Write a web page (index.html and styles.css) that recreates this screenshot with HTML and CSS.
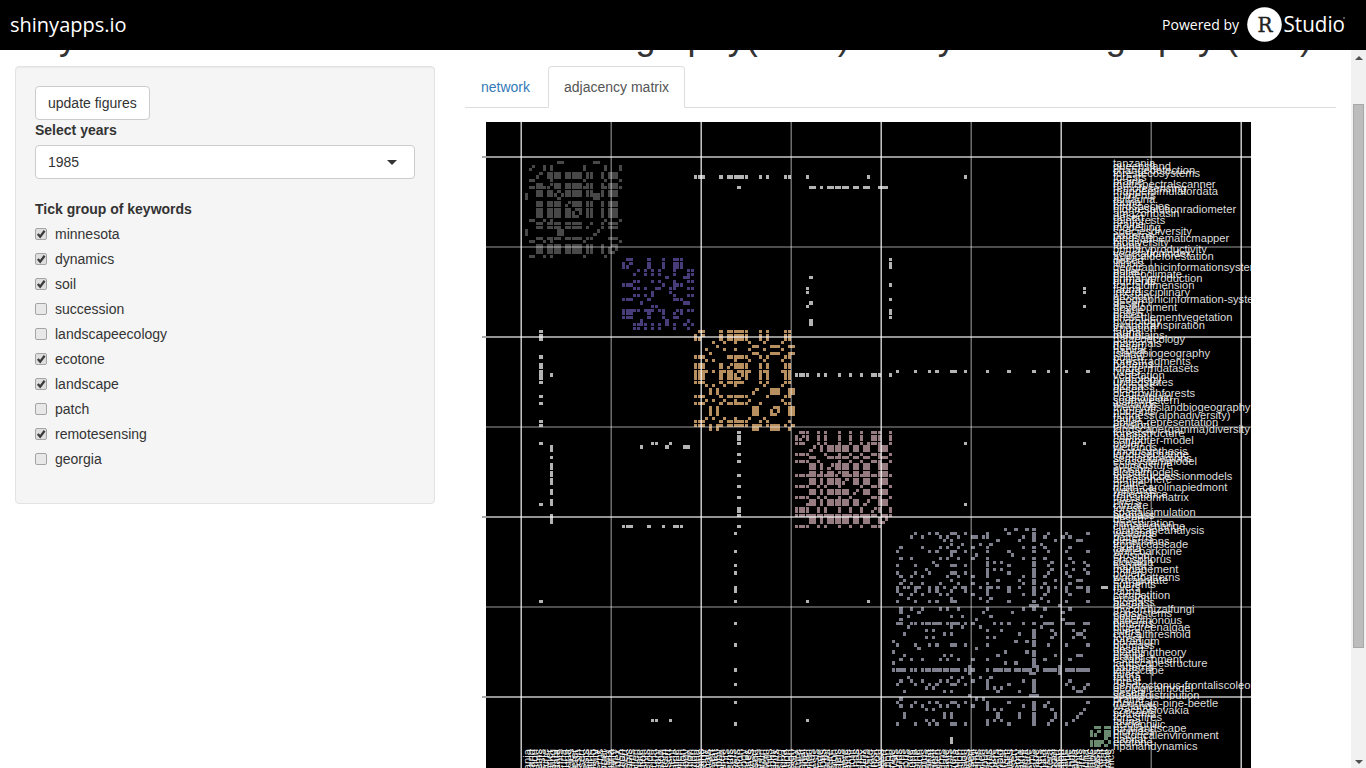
FILE: index.html
```html
<!DOCTYPE html>
<html lang="en">
<head>
<meta charset="utf-8">
<title>shinyapps.io</title>
<link rel="stylesheet" href="styles.css">
</head>
<body>
<header class="topbar">
  <span class="brand">shinyapps.io</span>
  <div class="powered">
    <span>Powered by</span>
    <svg class="logo" width="100" height="36" viewBox="0 0 100 36">
      <circle cx="17.5" cy="17.5" r="17.3" fill="#fff"/>
      <text class="logo-r" x="10.5" y="24.5" textLength="15" lengthAdjust="spacingAndGlyphs">R</text>
      <text class="logo-studio" x="36.5" y="25" textLength="61.5" lengthAdjust="spacingAndGlyphs">Studio</text>
      <circle cx="97" cy="11" r="1" fill="#777"/>
    </svg>
  </div>
</header>
<div class="view">
  <div class="page">
    <h1 class="title">Keywords co-occurrence in World <span class="geo">Geography(1990)</span> &amp; Physical Geography (GIS)</h1>
    <div class="columns">
      <aside class="sidebar">
        <button class="btn">update figures</button>
        <label class="label">Select years</label>
        <div class="select"><span>1985</span><i class="caret"></i></div>
        <div class="label group-label">Tick group of keywords</div>
        <div class="checks" id="checks"></div>
      </aside>
      <main class="main">
        <nav class="tabs"><a class="tab">network</a><a class="tab active">adjacency matrix</a></nav>
        <svg class="plot" id="plot" width="786" height="646" viewBox="465 122 786 646"></svg>
      </main>
    </div>
  </div>
  <div class="scrollbar"><i class="arrow up"></i><div class="track"><div class="thumb"></div></div><i class="arrow down"></i></div>
</div>
<script src="app.js"></script>
</body>
</html>
```
FILE: styles.css
```css
* { box-sizing: border-box; }
html, body { margin: 0; height: 100%; overflow: hidden; }
body { display: flex; flex-direction: column; font: 14px/20px "Liberation Sans", Arial, sans-serif; color: #333; background: #fff; }
.topbar { flex: none; height: 50px; background: #000; color: #fff; display: flex; align-items: center; justify-content: space-between; padding: 0 19px 0 10px; font-family: "Open Sans", "Noto Sans", sans-serif; }
.brand { font-size: 20px; }
.powered { display: flex; align-items: center; gap: 8px; font-size: 14px; }
.logo { display: block; }
.logo-r { font: 20.5px "DejaVu Serif", serif; fill: #222; stroke: #222; stroke-width: .4px; }
.logo-studio { font: 22px "Open Sans", sans-serif; fill: #fff; }
.view { flex: 1; min-height: 0; display: flex; overflow: hidden; }
.page { flex: 1; min-width: 0; padding: 0 15px; overflow: hidden; }
.title { margin: -33px 0 9px; height: 40px; font-size: 36px; line-height: 40px; font-weight: 500; white-space: nowrap; }
.geo { padding-left: 5px; }
.columns { display: flex; gap: 30px; align-items: flex-start; }
.sidebar { width: 420px; height: 438px; flex: none; background: #f5f5f5; border: 1px solid #e3e3e3; border-radius: 4px; padding: 19px; box-shadow: inset 0 1px 1px rgba(0,0,0,.05); }
.btn { display: block; height: 34px; padding: 6px 12px; font: inherit; color: #333; background: #fff; border: 1px solid #ccc; border-radius: 4px; }
.label { display: block; font-weight: 700; margin-bottom: 5px; }
.select { display: flex; align-items: center; justify-content: space-between; height: 34px; padding: 0 17px 0 12px; background: #fff; border: 1px solid #ccc; border-radius: 4px; }
.caret { border: 5px solid transparent; border-top-color: #333; border-bottom: 0; }
.group-label { margin-top: 20px; }
.checks { display: flex; flex-direction: column; gap: 5px; }
.check { display: flex; align-items: center; gap: 8px; height: 20px; }
.box { display: block; }
.main { flex: 1; min-width: 0; }
.tabs { display: flex; gap: 2px; height: 42px; border-bottom: 1px solid #ddd; }
.tab { height: 42px; padding: 10px 15px; border: 1px solid transparent; color: #337ab7; }
.tab.active { color: #555; background: #fff; border-color: #ddd #ddd #fff; border-radius: 4px 4px 0 0; }
.plot { display: block; margin-top: 14px; }
.word { font: 11.2px "Liberation Sans", Arial, sans-serif; fill: #fff; fill-opacity: .88; }
.scrollbar { width: 15px; flex: none; background: #f1f1f1; display: flex; flex-direction: column; align-items: center; padding: 6px 0 4px; }
.arrow { border: 4px solid transparent; }
.up { border-top: 0; border-bottom-color: #505050; }
.down { border-bottom: 0; border-top-color: #505050; }
.track { flex: 1; width: 11px; padding-top: 44px; }
.thumb { height: 544px; background: #bcbcbc; border: 1px solid #a8a8a8; }
```
FILE: app.js
```js
const groups = [["minnesota",1],["dynamics",1],["soil",1],["succession",0],["landscapeecology",0],["ecotone",1],["landscape",1],["patch",0],["remotesensing",1],["georgia",0]];
document.getElementById("checks").innerHTML = groups.map(([name, on]) =>
  `<label class="check"><svg class="box" width="12" height="12"><rect x=".5" y=".5" width="11" height="11" rx="1.5" fill="${on ? "#dedede" : "#e8e8e8"}" stroke="#a4a4a4"/>${on ? '<path d="M2.8 6l2.4 2.6L9.6 2.8" fill="none" stroke="#3c3c3c" stroke-width="2.3"/>' : ""}</svg><span>${name}</span></label>`).join("");

// Cell i starts at a whole pixel; five cells span eighteen pixels.
const STARTS = [0, 4, 7, 11, 14], SIZES = [3, 3, 3, 3, 4];
const wide = i => i > 130 && i % 5 === 1;
const at = i => Math.floor(i / 5) * 18 + STARTS[i % 5] - (wide(i) ? 1 : 0);
const size = i => SIZES[i % 5] + (wide(i) ? 1 : 0);
const X0 = 525, Y0 = 161;

const clusters = [
  { from: 0, color: "#484848", cliques: [[0,9,10,19,20],[8,9],[1,2,5,7,16,22,26],[3,4,6,7,8,9,11,12,13,14,15,17,18,21,23,24,25]] },
  { from: 27, color: "#483d7a", cliques: [[0,1,2,7,11,14,15,16],[3,4,6,8,10,14,18,19],[5,12,17,18],[8,9,13]] },
  { from: 47, color: "#b89060", cliques: [[0,1,2,7,9,10,11,12,13,14,18,20,25,26],[3,5,8,11,15,19,24],[4,6,16,17,21,22,23,26,27]] },
  { from: 75, color: "#967c80", cliques: [[0,1,2,3,6,8,12,15,18,21,22,23,26],[4,5,7,9,10,11,12,13,14,16,17,19,20,23,24,25],[3,20]] },
  { from: 102, color: "#7d808c", cliques: [[0,31,34,37,39],[1,6,10,12,16,17,20,26,32,39,43,48,54],[2,5,8,13,15,18,22,26,36,39,42,49],[2,23,25,47],[7,16],[7,23,33],[3,14,16,29,35,39,45,51,52],[4,16,19,24,27,41],[9,11,26,28,30,39,44,50,53],[21,38,39,40,46]] },
  { from: 157, color: "#6b8b70", cliques: [[0,1,2,4,5],[3,4]] }
];
const shift = (from, list) => list.map(v => v + from);
const links = [
  [4, shift(47, [0,1,2,7,9,10,11,12,13,14,18,20,25,26]).concat(78, 95, 122)],
  [7, [59].concat(shift(75, [4,5,7,9,10,11,12,13,14,16,17,19,20,23,24,25]))],
  [59, shift(75, [0,1,2,3,6,8,12,15,18,21,22,23,26])],
  [58, shift(102, [1,6,10,12,16,17,20,26,32,39,43,48,54])],
  [101, shift(27, [0,1,2,7,11,14,15,16])],
  [79, shift(27, [5,12,17,18])],
  [78, [35,36,40,122,155]],
  [95, [122]],
  [155, [35,36,40]],
  [118, [160,161]]
];
const cells = new Map();
for (const c of clusters) for (const q of c.cliques) for (const a of q) for (const b of q)
  if (a !== b) cells.set((c.from + a) + "," + (c.from + b), c.color);
for (const [a, list] of links) for (const b of list) {
  cells.set(a + "," + b, "#b4b4b4");
  cells.set(b + "," + a, "#b4b4b4");
}

const known = {0:"tanzania",1:"queensland",2:"changedetection",3:"forestecosystems",4:"forests",6:"multispectralscanner",7:"remotesensing",8:"mappersimulatordata",10:"avifauna",12:"birdspecies",13:"highresolutionradiometer",14:"amazonbasin",16:"rainforests",18:"modelling",19:"speciesdiversity",21:"landsatthematicmapper",22:"biodiversity",24:"primaryproductivity",25:"vegetationindex",26:"tropicaldeforestation",28:"illinois",29:"geographicinformationsystems",31:"palaeoclimate",32:"primaryproduction",34:"fractaldimension",36:"interdisciplinary",38:"geographicinformation-system",40:"development",43:"presettlementvegetation",44:"hydrology",45:"evapotranspiration",46:"irrigation",48:"mountains",49:"palaeoecology",50:"mammals",53:"islandbiogeography",55:"forestfragments",57:"longtermdatasets",59:"vegetation",60:"hydrology",61:"unitedstates",64:"oldgrowthforests",65:"coastalplain",66:"southwestern",68:"theoryofislandbiogeography",70:"richness(alphadiversity)",72:"pollen-representation",74:"landscape(gamma)diversity",75:"foreststructure",77:"computer-model",80:"photosynthesis",81:"landusechange",82:"semiaridregions",83:"ecosystemmodel",84:"soilmoisture",86:"globalmodels",87:"forestsuccessionmodels",88:"atmosphere",90:"north-carolinapiedmont",92:"reflectance",93:"transitionmatrix",95:"climate",97:"spatialsimulation",100:"transpiration",101:"climatechange",102:"landscapeanalysis",105:"dimensions",106:"trophiccascade",108:"whitebarkpine",110:"phosphorus",111:"slovakia",113:"management",115:"woodpatterns",116:"extrapolate",120:"competition",124:"mycorrhizalfungi",125:"ecosystems",127:"allochthonous",129:"bluegreenalgae",131:"criticalthreshold",133:"paradigm",136:"planningtheory",138:"establishment",139:"landscapestructure",141:"landscape",145:"dendroctonus-frontaliscoleoptera",146:"ecologicalmodel",148:"spatialdistribution",150:"mountain-pine-beetle",152:"czechoslovakia",154:"forestfires",156:"acidophilic",157:"rurallandscape",159:"historicalenvironment",161:"ecotone",162:"ripariandynamics"};
const short = ["forest","wetlands","biomass","nutrients","habitat","fauna","pollen","erosion","patterns","desert","rivers","prairie"];
const word = i => known[i] || short[(i * 7) % short.length];

let out = '<defs><clipPath id="panel"><rect x="486" y="122" width="765" height="646"/></clipPath></defs><g shape-rendering="crispEdges"><rect x="486" y="122" width="765" height="646" fill="#000"/>';
for (const [key, color] of cells) {
  const [r, c] = key.split(",").map(Number);
  out += `<rect x="${X0 + at(c)}" y="${Y0 + at(r)}" width="${size(c)}" height="${size(r)}" fill="${color}"/>`;
}
// Grid lines: every second one is bright.
for (let k = 0; k < 9; k++) {
  const x = 520 + 90 * k, m = k % 2 === 0;
  out += `<rect x="${x}" y="122" width="1" height="646" fill="#fff" opacity="${m ? .42 : .22}"/><rect x="${x + 1}" y="122" width="1" height="646" fill="#fff" opacity="${m ? .75 : .42}"/>`;
}
for (let k = 0; k < 7; k++) {
  const y = 156 + 90 * k, m = k % 2 === 0;
  out += `<rect x="486" y="${y}" width="765" height="2" fill="#fff" opacity="${m ? .58 : .3}"/>`;
  if (m) out += `<rect x="482" y="${y}" width="4" height="2" fill="#aaa"/>`;
}
out += '</g><g clip-path="url(#panel)">';
for (let i = 0; i < 163; i++) {
  out += `<text class="word" x="1113" y="${(Y0 + 5.6 + 3.6 * i).toFixed(1)}">${word(i)}</text>`;
  out += `<text class="word" text-anchor="end" transform="translate(${(X0 + 6 + 3.6 * i).toFixed(1)} 749) rotate(-90)">${word(i)}</text>`;
}
document.getElementById("plot").innerHTML = out + "</g>";
```
